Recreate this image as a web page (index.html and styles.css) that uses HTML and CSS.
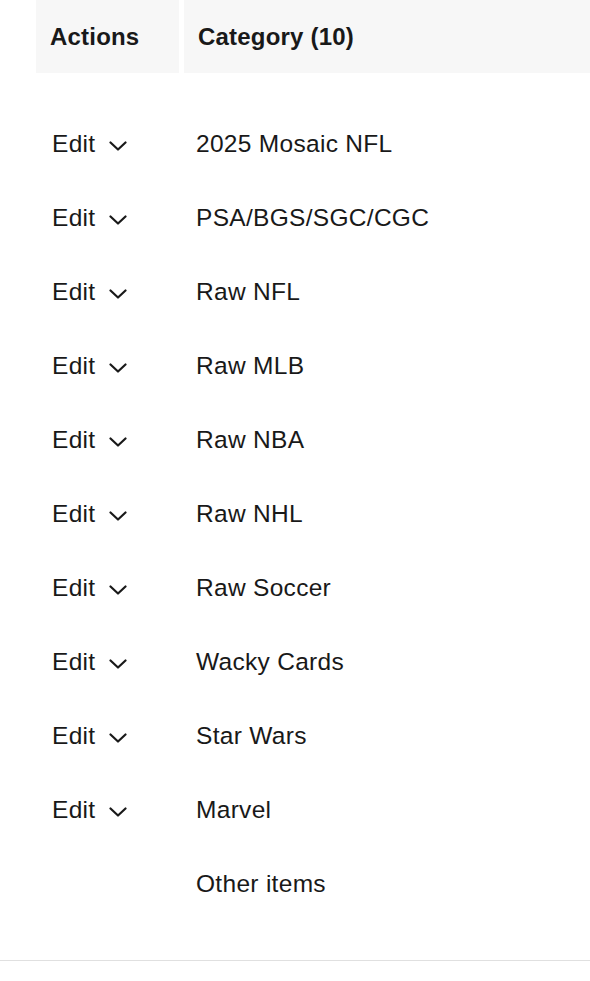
FILE: index.html
```html
<!DOCTYPE html>
<html>
<head>
<meta charset="utf-8">
<link rel="stylesheet" href="styles.css">
</head>
<body>
<div class="page">
  <div class="table">
    <div class="head">
      <div class="th th-actions">Actions</div>
      <div class="th th-cat">Category (10)</div>
    </div>
    <div class="rows">
      <div class="row"><div class="act">Edit<svg class="chev" viewBox="0 0 18 10"><path d="M1.5 1.5 L9 8.5 L16.5 1.5"/></svg></div><div class="cat">2025 Mosaic NFL</div></div>
      <div class="row"><div class="act">Edit<svg class="chev" viewBox="0 0 18 10"><path d="M1.5 1.5 L9 8.5 L16.5 1.5"/></svg></div><div class="cat">PSA/BGS/SGC/CGC</div></div>
      <div class="row"><div class="act">Edit<svg class="chev" viewBox="0 0 18 10"><path d="M1.5 1.5 L9 8.5 L16.5 1.5"/></svg></div><div class="cat">Raw NFL</div></div>
      <div class="row"><div class="act">Edit<svg class="chev" viewBox="0 0 18 10"><path d="M1.5 1.5 L9 8.5 L16.5 1.5"/></svg></div><div class="cat">Raw MLB</div></div>
      <div class="row"><div class="act">Edit<svg class="chev" viewBox="0 0 18 10"><path d="M1.5 1.5 L9 8.5 L16.5 1.5"/></svg></div><div class="cat">Raw NBA</div></div>
      <div class="row"><div class="act">Edit<svg class="chev" viewBox="0 0 18 10"><path d="M1.5 1.5 L9 8.5 L16.5 1.5"/></svg></div><div class="cat">Raw NHL</div></div>
      <div class="row"><div class="act">Edit<svg class="chev" viewBox="0 0 18 10"><path d="M1.5 1.5 L9 8.5 L16.5 1.5"/></svg></div><div class="cat">Raw Soccer</div></div>
      <div class="row"><div class="act">Edit<svg class="chev" viewBox="0 0 18 10"><path d="M1.5 1.5 L9 8.5 L16.5 1.5"/></svg></div><div class="cat">Wacky Cards</div></div>
      <div class="row"><div class="act">Edit<svg class="chev" viewBox="0 0 18 10"><path d="M1.5 1.5 L9 8.5 L16.5 1.5"/></svg></div><div class="cat">Star Wars</div></div>
      <div class="row"><div class="act">Edit<svg class="chev" viewBox="0 0 18 10"><path d="M1.5 1.5 L9 8.5 L16.5 1.5"/></svg></div><div class="cat">Marvel</div></div>
      <div class="row"><div class="act"></div><div class="cat">Other items</div></div>
    </div>
  </div>
  <div class="divider"></div>
</div>
</body>
</html>
```
FILE: styles.css
```css
html, body {
  margin: 0;
  padding: 0;
  background: #ffffff;
}
body {
  font-family: "Liberation Sans", Arial, sans-serif;
  color: #191919;
  width: 590px;
  height: 981px;
  overflow: hidden;
}
.page {
  display: flex;
  flex-direction: column;
}
.table {
  padding-left: 36px;
}
.head {
  display: grid;
  grid-template-columns: 143px 1fr;
  column-gap: 5px;
  height: 73px;
}
.th {
  background: #f7f7f7;
  font-weight: 700;
  font-size: 24px;
  letter-spacing: 0.2px;
  display: flex;
  align-items: center;
  padding-left: 14px;
  padding-top: 1px;
}
.rows {
  padding-top: 34px;
  display: flex;
  flex-direction: column;
}
.row {
  display: grid;
  grid-template-columns: 148px 1fr;
  height: 74px;
  font-size: 24.5px;
  letter-spacing: 0.3px;
  line-height: 74px;
}
.row:nth-child(n+8) {
  margin-top: 0;
}
.act {
  display: flex;
  align-items: center;
  padding-left: 16px;
}
.chev {
  width: 18px;
  height: 10px;
  margin-left: 14px;
  margin-top: 4px;
  fill: none;
  stroke: #191919;
  stroke-width: 2.2;
  stroke-linecap: round;
  stroke-linejoin: round;
}
.cat {
  padding-left: 12px;
}
.divider {
  margin-top: 39px;
  height: 1px;
  background: #e0e0e0;
}
```
